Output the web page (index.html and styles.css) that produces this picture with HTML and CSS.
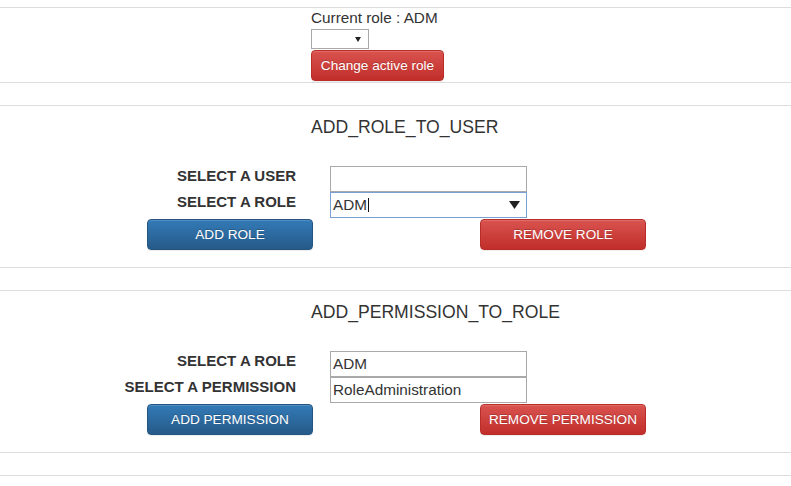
FILE: index.html
```html
<!DOCTYPE html>
<html lang="en">
<head>
<meta charset="utf-8">
<title>Roles</title>
<link rel="stylesheet" href="styles.css">
</head>
<body>
<div class="page">
  <section class="panel panel-role">
    <div class="current">Current role : ADM</div>
    <div class="mini-select">
      <svg class="caret-sm" width="6" height="5" viewBox="0 0 6 5"><polygon points="0,0 6,0 3,5" fill="#222"/></svg>
    </div>
    <button class="btn btn-danger btn-change">Change active role</button>
  </section>

  <section class="panel panel-form">
    <h4 class="title">ADD_ROLE_TO_USER</h4>
    <div class="fields">
      <label class="field-label">SELECT A USER</label>
      <div class="field"></div>
      <label class="field-label">SELECT A ROLE</label>
      <div class="field select focused">
        <span class="value">ADM</span><span class="cursor"></span>
        <svg class="caret" width="11" height="8" viewBox="0 0 11 8"><polygon points="0,0 11,0 5.5,8" fill="#222"/></svg>
      </div>
    </div>
    <div class="actions">
      <button class="btn btn-primary">ADD ROLE</button>
      <button class="btn btn-danger">REMOVE ROLE</button>
    </div>
  </section>

  <section class="panel panel-form">
    <h4 class="title">ADD_PERMISSION_TO_ROLE</h4>
    <div class="fields">
      <label class="field-label">SELECT A ROLE</label>
      <div class="field"><span class="value">ADM</span></div>
      <label class="field-label">SELECT A PERMISSION</label>
      <div class="field"><span class="value">RoleAdministration</span></div>
    </div>
    <div class="actions">
      <button class="btn btn-primary">ADD PERMISSION</button>
      <button class="btn btn-danger">REMOVE PERMISSION</button>
    </div>
  </section>

  <section class="panel panel-empty"></section>
</div>
</body>
</html>
```

FILE: styles.css
```css
html, body {
  margin: 0;
  padding: 0;
  background: #fff;
}

body {
  font-family: "Liberation Sans", Arial, sans-serif;
  font-size: 15px;
  color: #333;
}

.page {
  padding-top: 7px;
}

.panel {
  border-top: 1px solid #ddd;
  border-bottom: 1px solid #ddd;
  margin-bottom: 22px;
}

.panel-role {
  display: flex;
  flex-direction: column;
  align-items: flex-start;
  padding: 0 0 1px 311px;
}

.current {
  line-height: 20px;
  height: 20px;
  font-size: 15.3px;
}

.mini-select {
  box-sizing: border-box;
  width: 58px;
  height: 20px;
  margin-top: 1px;
  border: 1px solid #a9a9a9;
  background: #fff;
  display: flex;
  align-items: center;
  justify-content: flex-end;
  padding-right: 7px;
}

.caret-sm {
  display: block;
}

.btn {
  box-sizing: border-box;
  height: 31px;
  padding: 0;
  border: 1px solid transparent;
  border-radius: 4px;
  font-family: "Liberation Sans", Arial, sans-serif;
  font-size: 13.6px;
  line-height: 29px;
  white-space: nowrap;
  text-align: center;
  color: #fff;
  text-shadow: 0 -1px 0 rgba(0, 0, 0, 0.2);
  box-shadow: inset 0 1px 0 rgba(255, 255, 255, 0.15), 0 1px 1px rgba(0, 0, 0, 0.075);
  cursor: pointer;
}

.btn-danger {
  background: linear-gradient(to bottom, #d9534f 0%, #c12e2a 100%);
  border-color: #b92c28;
}

.btn-primary {
  background: linear-gradient(to bottom, #337ab7 0%, #265a88 100%);
  border-color: #245580;
}

.btn-change {
  margin-top: 1px;
  width: 133px;
}

.panel-form {
  padding-bottom: 17px;
}

.title {
  margin: 11px 0 29px 311px;
  font-size: 17.6px;
  font-weight: normal;
  line-height: 20px;
  color: #333;
}

.fields {
  display: grid;
  grid-template-columns: 296px 197px;
  grid-auto-rows: 26px;
  column-gap: 34px;
}

.field-label {
  align-self: start;
  text-align: right;
  font-weight: bold;
  line-height: 20px;
  color: #333;
}

.field {
  box-sizing: border-box;
  height: 26px;
  border: 1px solid #a9a9a9;
  background: #fff;
  display: flex;
  align-items: center;
  padding: 0 6px 0 2px;
  color: #333;
  font-size: 15.3px;
}

.field.focused {
  border-color: #7a9fd3;
}

.value {
  white-space: nowrap;
}

.cursor {
  display: inline-block;
  width: 1px;
  height: 14px;
  background: #111;
  margin-left: 1px;
}

.caret {
  display: block;
  margin-left: auto;
}

.actions {
  display: flex;
  gap: 167px;
  padding-left: 147px;
  margin-top: 1px;
}

.actions .btn {
  width: 166px;
}

.panel-empty {
  border-bottom: none;
  margin-bottom: 0;
  height: 9px;
}
```
